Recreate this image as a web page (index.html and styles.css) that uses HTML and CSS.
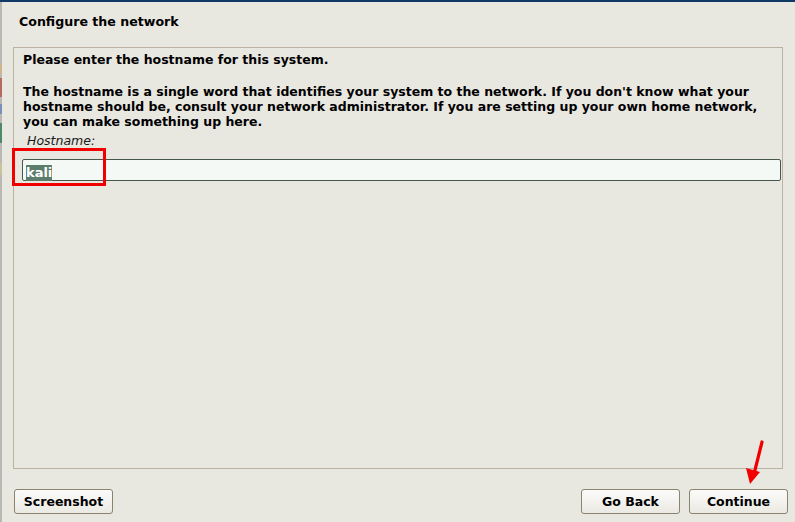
FILE: index.html
```html
<!DOCTYPE html>
<html>
<head>
<meta charset="utf-8">
<link rel="stylesheet" href="styles.css">
</head>
<body>
<div class="topbar"></div>
<div class="leftstrip">
  <span class="seg s1"></span><span class="seg s2"></span><span class="seg s3"></span><span class="seg s4"></span><span class="seg s5"></span>
</div>
<div class="screen">
  <h1 class="title">Configure the network</h1>
  <div class="panel">
    <p class="lead">Please enter the hostname for this system.</p>
    <p class="desc">The hostname is a single word that identifies your system to the network. If you don't know what your hostname should be, consult your network administrator. If you are setting up your own home network, you can make something up here.</p>
    <div class="label">Hostname:</div>
    <div class="field"><span class="sel">kali</span></div>
  </div>
  <div class="buttons">
    <button class="btn">Screenshot</button>
    <div class="spacer"></div>
    <button class="btn">Go Back</button>
    <button class="btn">Continue</button>
  </div>
</div>
<div class="redbox"></div>
<svg class="arrow" width="30" height="50" viewBox="0 0 30 50">
  <line x1="25" y1="2" x2="17" y2="34" stroke="#f20000" stroke-width="3.2" stroke-linecap="round"/>
  <polygon points="9,28 23,32 13,44" fill="#f20000"/>
</svg>
</body>
</html>
```
FILE: styles.css
```css
html, body {
  margin: 0;
  padding: 0;
}
body {
  width: 795px;
  height: 522px;
  background: #e8e7e0;
  font-family: "DejaVu Sans", sans-serif;
  color: #000;
  position: relative;
  overflow: hidden;
}
.topbar {
  height: 2px;
  background: #0f3a66;
}
.leftstrip {
  position: absolute;
  left: 0;
  top: 2px;
  width: 2px;
  height: 520px;
  background: #b9b8b3;
  display: flex;
  flex-direction: column;
}
.seg { display: block; width: 2px; }
.s1 { margin-top: 62px; height: 10px; background: #c9b98a; }
.s2 { margin-top: 4px; height: 19px; background: #b96a60; }
.s3 { margin-top: 7px; height: 10px; background: #7a90b8; }
.s4 { margin-top: 9px; height: 20px; background: #4f8a68; }
.s5 { margin-top: 20px; height: 12px; background: #c8c49a; }
.screen {
  display: flex;
  flex-direction: column;
  padding: 0 8px 0 13px;
  height: 520px;
}
.title {
  margin: 0;
  padding: 11px 0 0 6px;
  height: 34px;
  box-sizing: border-box;
  font-size: 12.6px;
  font-weight: bold;
  line-height: 18px;
}
.panel {
  height: 422px;
  box-sizing: border-box;
  border: 1px solid #bab3a4;
  padding: 4px 8px 0 9px;
  width: 770px;
  margin-top: 11px;
}
.lead {
  margin: 0;
  font-size: 12.5px;
  font-weight: bold;
  line-height: 16px;
}
.desc {
  margin: 16px 0 0 0;
  font-size: 12.5px;
  font-weight: bold;
  line-height: 15px;
}
.label {
  margin: 4px 0 0 4px;
  font-size: 12.5px;
  font-style: italic;
  line-height: 16px;
  color: #1a1a1a;
}
.field {
  margin: 10px 0 0 -1px;
  height: 22px;
  box-sizing: border-box;
  border: 1px solid #46574d;
  border-radius: 2px;
  background: #f5f9f5;
  padding: 2px 0 0 3px;
  width: 759px;
}
.sel {
  display: inline-block;
  background: #5c7d6c;
  color: #fff;
  font-size: 13px;
  font-weight: bold;
  line-height: 16px;
  padding: 0;
}
.buttons {
  display: flex;
  margin-top: 20px;
  gap: 9px;
}
.spacer { flex: 1; }
.btn {
  width: 99px;
  height: 25px;
  margin: 0;
  padding: 0;
  border: 1px solid #8b8270;
  border-radius: 3px;
  background: linear-gradient(#fbfbf9, #ebe9e3);
  font-family: "DejaVu Sans", sans-serif;
  font-size: 12.5px;
  font-weight: bold;
  color: #000;
}
.btn:first-child { margin-left: 1px; }
.btn:last-child { margin-right: -1px; }
.redbox {
  position: absolute;
  left: 12px;
  top: 148px;
  width: 88px;
  height: 32px;
  border: 3px solid #f00000;
}
.arrow {
  position: absolute;
  left: 737px;
  top: 440px;
}
```
